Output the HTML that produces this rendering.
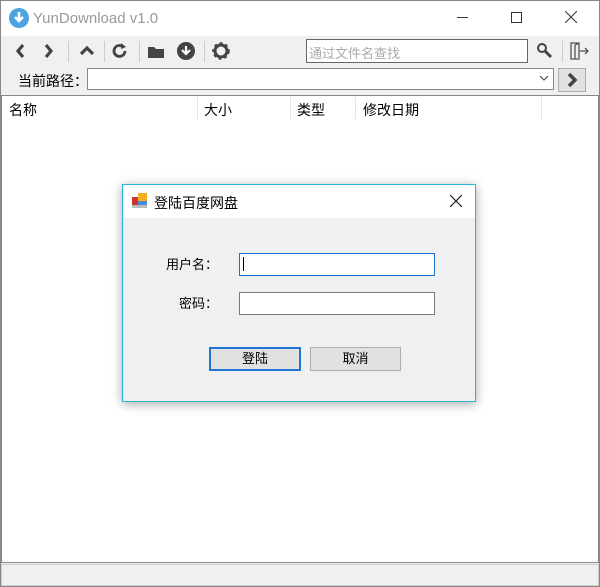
<!DOCTYPE html><html><head><style>
*{box-sizing:border-box;margin:0;padding:0}
body{width:600px;height:587px;overflow:hidden;background:#f0f0f0;font-family:"Liberation Sans","Noto Sans CJK SC",sans-serif;font-size:13px;color:#000;position:relative}
.a{position:absolute}
</style></head><body>
<div class="a" style="left:0;top:0;width:600px;height:587px;border:1px solid #888"></div>
<div class="a" style="left:1px;top:1px;width:598px;height:35px;background:#fff"></div>
<svg class="a" style="left:8px;top:7px" width="22" height="22"><circle cx="11" cy="11" r="10" fill="#4da3e0"/><path d="M11 5v9M7 10l4 4 4-4" stroke="#fff" stroke-width="2.6" fill="none"/></svg>
<div class="a" style="left:33px;top:10px;font-size:15px;color:#999">YunDownload v1.0</div>
<div class="a" style="left:457px;top:17px;width:11px;height:1px;background:#333"></div>
<div class="a" style="left:511px;top:12px;width:11px;height:11px;border:1px solid #333"></div>
<svg class="a" style="left:565px;top:11px" width="12" height="12"><path d="M0 0L12 12M12 0L0 12" stroke="#333"/></svg>
<svg class="a" style="left:0;top:38px" width="250" height="26" fill="none" stroke="#444" stroke-width="3.2">
<path d="M23 7l-5 6 5 6M46 7l5 6-5 6M81 16l6-6 6 6"/>
<path d="M125 13a5.5 5.5 0 1 1-2-4.3" stroke-width="2.8"/><path d="M121 5l5 4-5 2" fill="#444" stroke="none"/>
<path d="M148 9h6l2 2h8v9h-16z" fill="#444" stroke="none"/>
<circle cx="186" cy="13" r="9" fill="#444" stroke="none"/><path d="M186 8v8M182 12l4 4 4-4" stroke="#fff" stroke-width="2.2"/>
<circle cx="221" cy="13" r="6" stroke-width="3"/><circle cx="221" cy="13" r="8" stroke-width="1.5" stroke-dasharray="3 3"/>
</svg>
<div class="a" style="left:68px;top:41px;width:1px;height:21px;background:#ccc"></div>
<div class="a" style="left:104px;top:41px;width:1px;height:21px;background:#ccc"></div>
<div class="a" style="left:139px;top:41px;width:1px;height:21px;background:#ccc"></div>
<div class="a" style="left:204px;top:41px;width:1px;height:21px;background:#ccc"></div>
<div class="a" style="left:306px;top:39px;width:222px;height:24px;background:#fff;border:1px solid #666;color:#aaa;padding:3px 2px;font-size:13px">通过文件名查找</div>
<svg class="a" style="left:535px;top:41px" width="20" height="20"><circle cx="7" cy="7" r="4" fill="none" stroke="#444" stroke-width="2"/><path d="M10 10l6 6" stroke="#444" stroke-width="3"/></svg>
<div class="a" style="left:562px;top:41px;width:1px;height:21px;background:#ccc"></div>
<svg class="a" style="left:569px;top:41px" width="22" height="20" fill="none" stroke="#555" stroke-width="1.3"><path d="M2 2h8v16H2zM10 2l-4 2v14M11 10h8M16 7l3 3-3 3"/></svg>
<div class="a" style="left:18px;top:71px;font-size:14px">当前路径：</div>
<div class="a" style="left:87px;top:68px;width:467px;height:22px;background:#fff;border:1px solid #888"></div>
<svg class="a" style="left:539px;top:74px" width="10" height="8"><path d="M1 2l4 4 4-4" stroke="#444" fill="none"/></svg>
<div class="a" style="left:558px;top:68px;width:28px;height:24px;background:#e1e1e1;border:1px solid #adadad"></div>
<svg class="a" style="left:566px;top:72px" width="14" height="16"><path d="M3 2l6 6-6 6" stroke="#444" stroke-width="3.5" fill="none"/></svg>
<div class="a" style="left:1px;top:95px;width:598px;height:468px;background:#fff;border:1px solid #888"></div>
<div class="a" style="left:9px;top:100px;font-size:14px">名称</div>
<div class="a" style="left:204px;top:100px;font-size:14px">大小</div>
<div class="a" style="left:297px;top:100px;font-size:14px">类型</div>
<div class="a" style="left:363px;top:100px;font-size:14px">修改日期</div>
<div class="a" style="left:197px;top:97px;width:1px;height:22px;background:#e5e5e5"></div>
<div class="a" style="left:290px;top:97px;width:1px;height:22px;background:#e5e5e5"></div>
<div class="a" style="left:355px;top:97px;width:1px;height:22px;background:#e5e5e5"></div>
<div class="a" style="left:541px;top:97px;width:1px;height:22px;background:#e5e5e5"></div>
<div class="a" style="left:1px;top:564px;width:598px;height:22px;background:#f0f0f0;border:1px solid #ccc"></div>
<div class="a" style="left:122px;top:184px;width:354px;height:218px;background:#f0f0f0;border:1px solid #2bb5d4;box-shadow:0 2px 10px rgba(0,0,0,.35)"></div>
<div class="a" style="left:123px;top:185px;width:352px;height:33px;background:#fff"></div>
<svg class="a" style="left:132px;top:193px" width="16" height="16"><rect x="0" y="4" width="6" height="8" fill="#c33"/><rect x="6" y="0" width="9" height="8" fill="#f0b020"/><rect x="6" y="8" width="9" height="6" fill="#4a8ad8"/><rect x="0" y="12" width="15" height="3" fill="#bbb"/></svg>
<div class="a" style="left:154px;top:193px;font-size:14px">登陆百度网盘</div>
<svg class="a" style="left:450px;top:195px" width="12" height="12"><path d="M0 0L12 12M12 0L0 12" stroke="#222" stroke-width="1.2"/></svg>
<div class="a" style="left:166px;top:254px;font-size:13px">用户名：</div>
<div class="a" style="left:179px;top:293px;font-size:13px">密码：</div>
<div class="a" style="left:239px;top:253px;width:196px;height:23px;background:#fff;border:1px solid #1e6fc8"></div>
<div class="a" style="left:243px;top:257px;width:1px;height:14px;background:#000"></div>
<div class="a" style="left:239px;top:292px;width:196px;height:23px;background:#fff;border:1px solid #7a7a7a"></div>
<div class="a" style="left:209px;top:347px;width:92px;height:24px;background:#e1e1e1;border:2px solid #1f74d4;text-align:center;line-height:20px">登陆</div>
<div class="a" style="left:310px;top:347px;width:91px;height:24px;background:#e1e1e1;border:1px solid #adadad;text-align:center;line-height:22px">取消</div>
</body></html>
